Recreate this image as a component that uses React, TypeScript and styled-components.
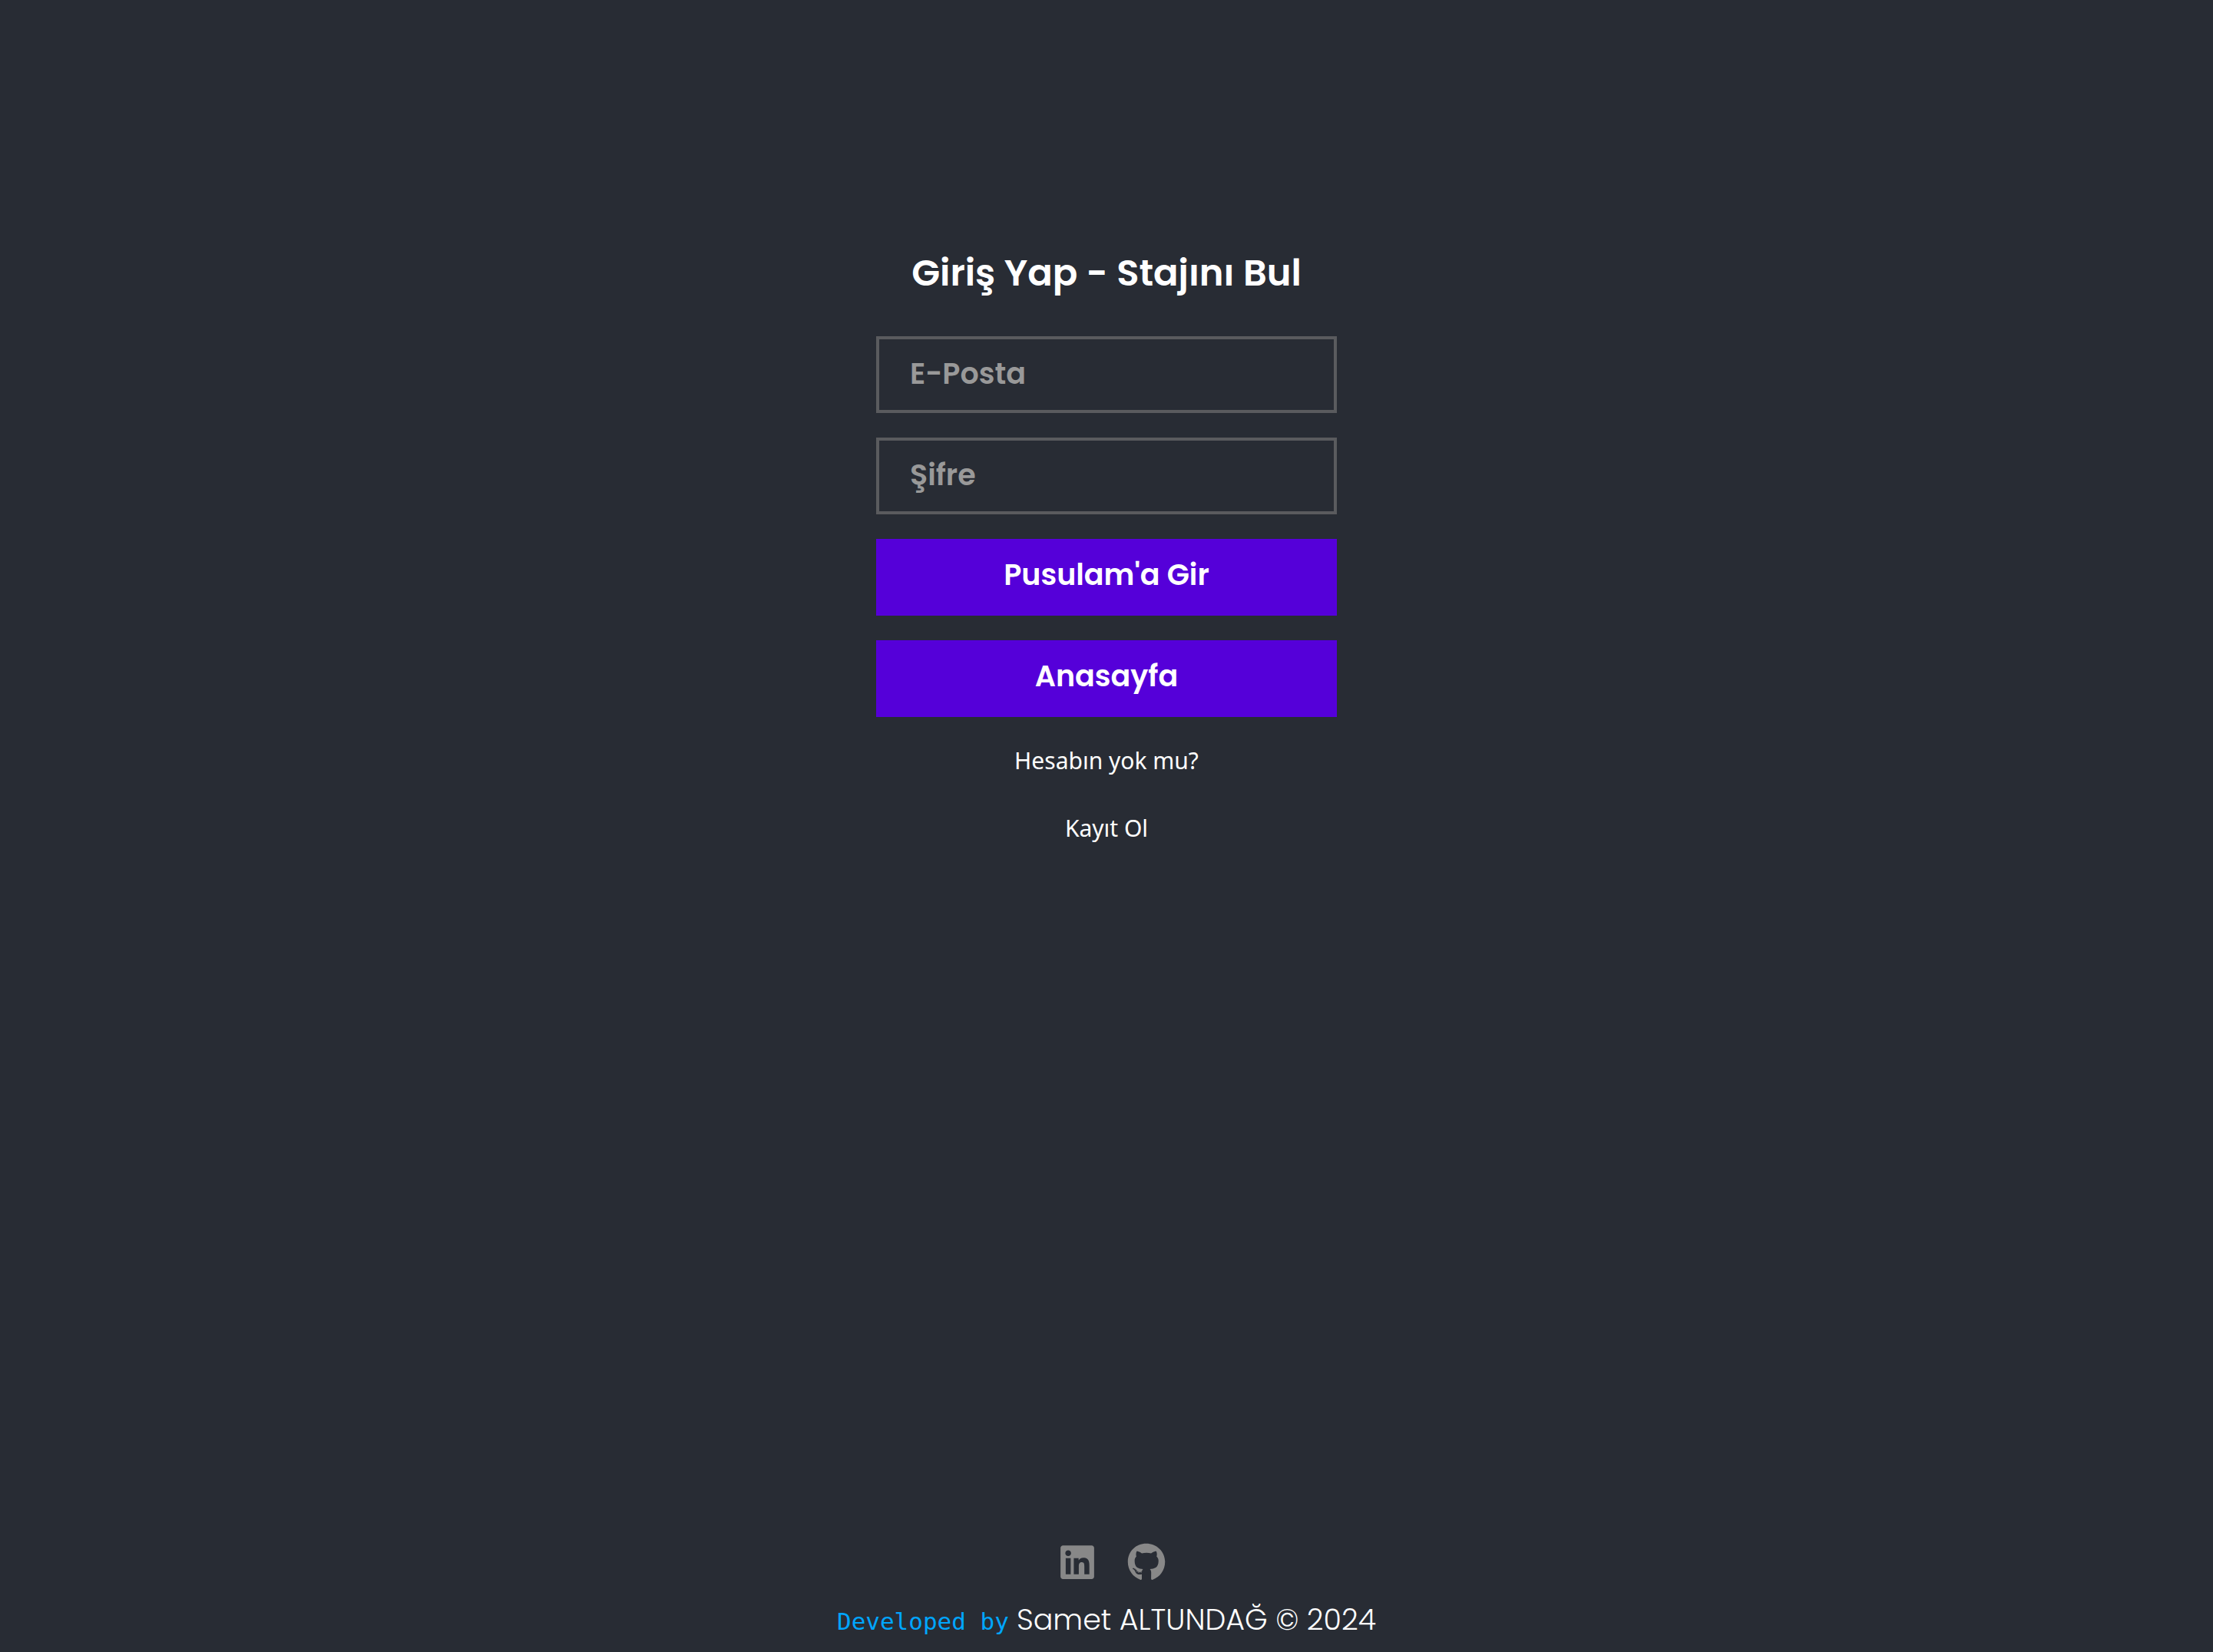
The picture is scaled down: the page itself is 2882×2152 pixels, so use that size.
import React from "react";
import styled, { createGlobalStyle } from "styled-components";
import { FaGithub, FaLinkedin } from "react-icons/fa";

const GlobalStyle = createGlobalStyle`
  *, *::before, *::after { box-sizing: border-box; }
  body {
    margin: 0;
    background: #282c34;
    color: #ffffff;
    font-family: Poppins, Inter, "Liberation Sans", sans-serif;
  }
`;

const Page = styled.div`
  min-height: 100vh;
  display: flex;
  flex-direction: column;
  align-items: center;
  justify-content: space-between;
  padding: 319px 32px 10px;
`;

const LoginForm = styled.form`
  width: 100%;
  max-width: 600px;
  display: flex;
  flex-direction: column;
  gap: 32px;
`;

const Title = styled.h1`
  margin: 0 0 13px;
  font-size: 48px;
  line-height: 74px;
  font-weight: 600;
  text-align: center;
  white-space: nowrap;
`;

const Field = styled.input`
  width: 100%;
  height: 100px;
  padding: 0 40px 4px;
  border: 4px solid #5a5b5e;
  border-radius: 0;
  background: transparent;
  color: #ffffff;
  font: inherit;
  font-size: 38px;
  font-weight: 600;
  outline: none;

  &::placeholder {
    color: #999999;
    opacity: 1;
  }
`;

const SubmitButton = styled.button`
  width: 100%;
  height: 100px;
  padding: 0 0 8px;
  border: 0;
  background: #5500d9;
  color: #ffffff;
  font: inherit;
  font-size: 38px;
  font-weight: 600;
  cursor: pointer;
`;

const SignUp = styled.div`
  display: flex;
  flex-direction: column;
  align-items: center;
  gap: 38px;
  font-family: "Segoe UI", "Noto Sans", sans-serif;
  font-size: 30px;
  line-height: 50px;
`;

const Note = styled.p`
  margin: 0;
`;

const SignUpLink = styled.a`
  color: inherit;
  text-decoration: none;
`;

const Footer = styled.footer`
  display: flex;
  flex-direction: column;
  align-items: center;
  gap: 20px;
`;

const Socials = styled.nav`
  display: flex;
  gap: 40px;
  padding-left: 14px;
`;

const SocialLink = styled.a`
  display: flex;
  color: #888888;
  font-size: 50px;
`;

const Credit = styled.p`
  margin: 0;
  display: flex;
  align-items: baseline;
  gap: 10px;
  font-size: 38px;
  line-height: 60px;
  font-weight: 300;
`;

const CreditLabel = styled.span`
  color: #00a6ff;
  font-family: Consolas, "DejaVu Sans Mono", monospace;
  font-size: 31px;
  font-weight: 400;
`;

export default function App() {
  return (
    <>
      <GlobalStyle />
      <Page>
        <LoginForm onSubmit={(event) => event.preventDefault()}>
          <Title>Giriş Yap - Stajını Bul</Title>
          <Field type="email" aria-label="E-Posta" placeholder="E-Posta" />
          <Field type="password" aria-label="Şifre" placeholder="Şifre" />
          <SubmitButton type="submit">Pusulam'a Gir</SubmitButton>
          <SubmitButton type="button">Anasayfa</SubmitButton>
          <SignUp>
            <Note>Hesabın yok mu?</Note>
            <SignUpLink href="#kayit">Kayıt Ol</SignUpLink>
          </SignUp>
        </LoginForm>
        <Footer>
          <Socials>
            <SocialLink href="#linkedin" aria-label="LinkedIn">
              <FaLinkedin />
            </SocialLink>
            <SocialLink href="#github" aria-label="GitHub">
              <FaGithub />
            </SocialLink>
          </Socials>
          <Credit>
            <CreditLabel>Developed by</CreditLabel>
            <span>Samet ALTUNDAĞ © 2024</span>
          </Credit>
        </Footer>
      </Page>
    </>
  );
}
